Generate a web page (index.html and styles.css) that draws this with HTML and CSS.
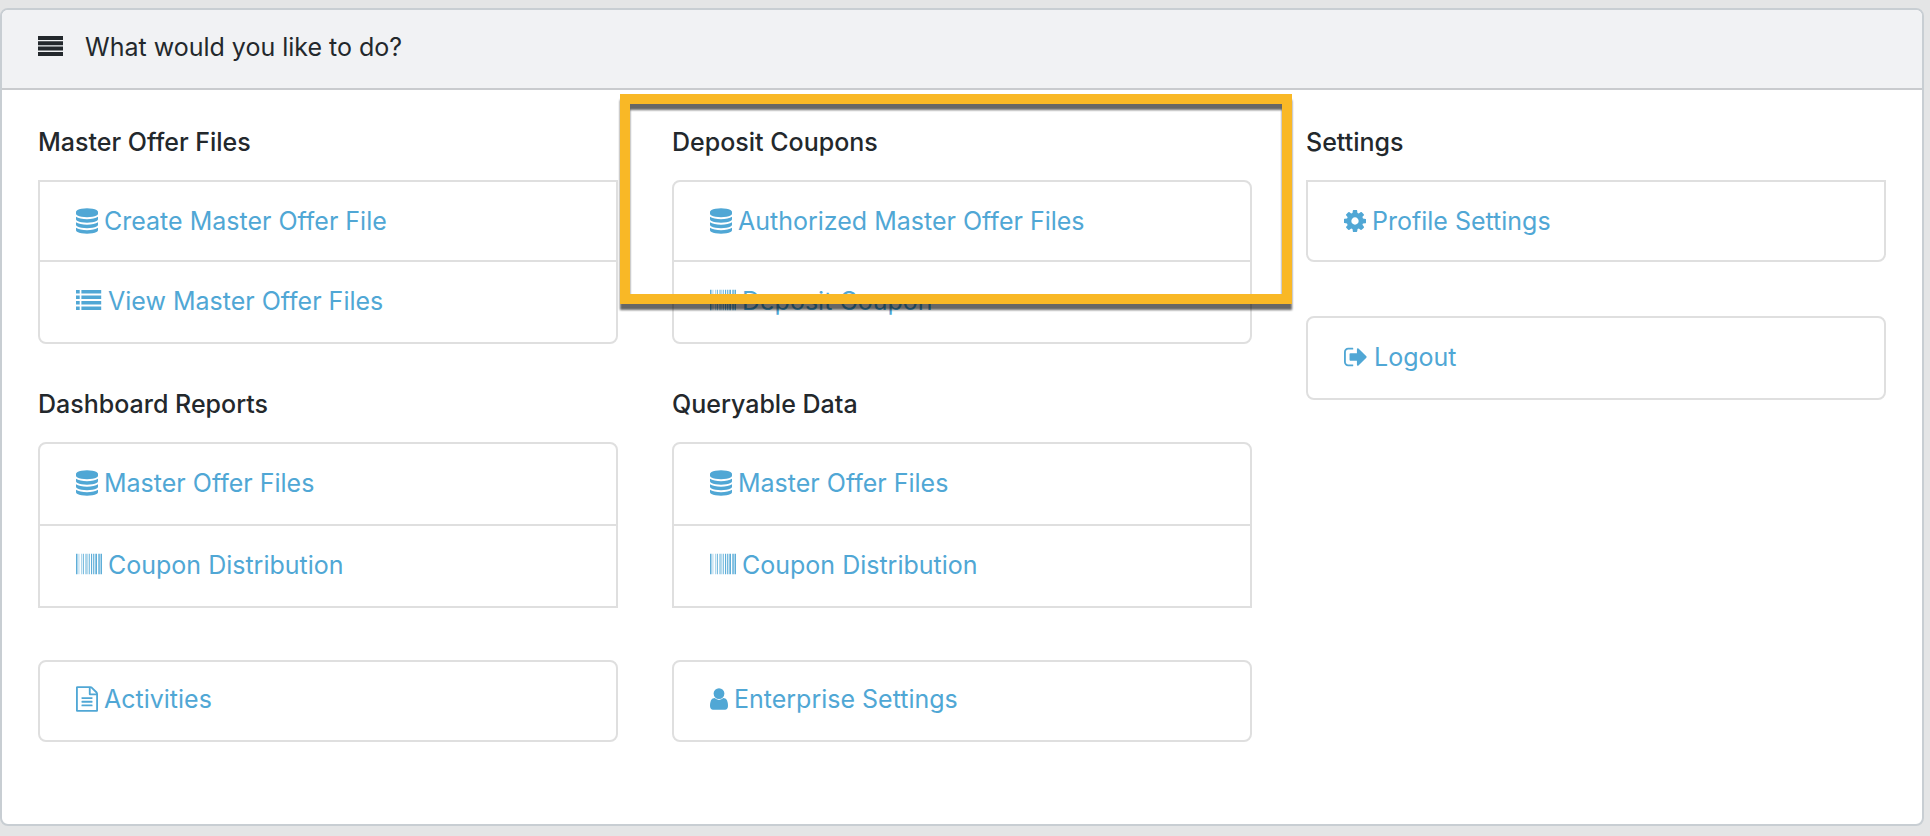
FILE: index.html
```
<!DOCTYPE html>
<html lang="en">

<head>
    <meta charset="utf-8">
    <meta name="viewport" content="width=device-width, initial-scale=1.0">
    <title>What would you like to do?</title>
    <link rel="stylesheet" href="styles.css">
</head>

<body>
    <!-- icons -->
    <svg class="sprite" aria-hidden="true">
        <symbol id="bars" viewBox="0 0 26 26">
            <path d="M0 2h25v4H0zM0 7.3h25v4H0zM0 12.6h25v4H0zM0 18h25v4H0z" />
        </symbol>
        <symbol id="list" viewBox="0 0 26 26">
            <path d="M0 2h3.7v3.6H0zM0 7.4h3.7V11H0zM0 13h3.7v3.6H0zM0 18.4h3.7V22H0zM5.4 2h19.8v3.6H5.4zM5.4 7.4h19.8V11H5.4zM5.4 13h19.8v3.6H5.4zM5.4 18.4h19.8V22H5.4z" />
        </symbol>
        <symbol id="database" viewBox="128 0 1536 1792">
            <path d="M896 768q237 0 443-43t325-127v170q0 69-103 128t-280 93.500-385 34.500-385-34.500-280-93.500-103-128v-170q119 84 325 127t443 43zm0 768q237 0 443-43t325-127v170q0 69-103 128t-280 93.500-385 34.500-385-34.500-280-93.500-103-128v-170q119 84 325 127t443 43zm0-384q237 0 443-43t325-127v170q0 69-103 128t-280 93.500-385 34.500-385-34.500-280-93.500-103-128v-170q119 84 325 127t443 43zm0-1152q208 0 385 34.500t280 93.500 103 128v128q0 69-103 128t-280 93.500-385 34.500-385-34.500-280-93.500-103-128v-128q0-69 103-128t280-93.500 385-34.500z" />
        </symbol>
        <symbol id="barcode" viewBox="0 0 1792 1792">
            <path d="M0 128h63v1408H0zM94 128h32v1408H94zM189 128h31v1408h-31zM346 128h31v1408h-31zM472 128h62v1408h-62zM629 128h31v1408h-31zM692 128h31v1408h-31zM755 128h31v1408h-31zM881 128h62v1408h-62zM1037 128h63v1408h-63zM1163 128h63v1408h-63zM1289 128h63v1408h-63zM1383 128h63v1408h-63zM1541 128h94v1408h-94zM1666 128h32v1408h-32zM1729 128h63v1408h-63z" />
        </symbol>
        <symbol id="cog" viewBox="128 0 1536 1792">
            <path d="M1152 896q0-106-75-181t-181-75-181 75-75 181 75 181 181 75 181-75 75-181zm512-109v222q0 12-8 23t-20 13l-185 28q-19 54-39 91 35 50 107 138 10 12 10 25t-9 23q-27 37-99 108t-94 71q-12 0-26-9l-138-108q-44 23-91 38-16 136-29 186-7 28-36 28h-222q-14 0-24.500-8.500t-11.500-21.500l-28-184q-49-16-90-37l-141 107q-10 9-25 9-14 0-25-11-126-114-165-168-7-10-7-23 0-12 8-23 15-21 51-66.500t54-70.500q-27-50-41-99l-183-27q-13-2-21-12.500t-8-23.500v-222q0-12 8-23t19-13l186-28q14-46 39-92-40-57-107-138-10-12-10-24 0-10 9-23 26-36 98.500-107.500t94.500-71.500q13 0 26 10l138 107q44-23 91-38 16-136 29-186 7-28 36-28h222q14 0 24.500 8.500t11.500 21.500l28 184q49 16 90 37l142-107q9-9 24-9 13 0 25 10 129 119 165 170 7 8 7 22 0 12-8 23-15 21-51 66.500t-54 70.500q26 50 41 98l183 28q13 2 21 12.500t8 23.500z" />
        </symbol>
        <symbol id="sign-out" viewBox="64 0 1664 1792">
            <path d="M704 1440q0 4 1 20t.5 26.500-3 23.500-10 19.500-20.500 6.500h-320q-119 0-203.500-84.500t-84.500-203.500v-704q0-119 84.500-203.500t203.500-84.500h320q13 0 22.500 9.500t9.500 22.500q0 4 1 20t.5 26.500-3 23.500-10 19.500-20.500 6.500h-320q-66 0-113 47t-47 113v704q0 66 47 113t113 47h312l11.500 1 11.500 3 8 5.500 7 9 2 13.500zm928-544q0 26-19 45l-544 544q-19 19-45 19t-45-19-19-45v-288h-448q-26 0-45-19t-19-45v-384q0-26 19-45t45-19h448v-288q0-26 19-45t45-19 45 19l544 544q19 19 19 45z" />
        </symbol>
        <symbol id="file" viewBox="128 0 1536 1792">
            <path d="M1596 380q28 28 48 76t20 88v1152q0 40-28 68t-68 28h-1344q-40 0-68-28t-28-68v-1600q0-40 28-68t68-28h896q40 0 88 20t76 48zm-444-244v376h376q-10-29-22-41l-313-313q-12-12-41-22zm384 1528v-1024h-416q-40 0-68-28t-28-68v-416h-768v1536h1280zm-1024-864q0-14 9-23t23-9h704q14 0 23 9t9 23v64q0 14-9 23t-23 9h-704q-14 0-23-9t-9-23v-64zm736 224q14 0 23 9t9 23v64q0 14-9 23t-23 9h-704q-14 0-23-9t-9-23v-64q0-14 9-23t23-9h704zm0 256q14 0 23 9t9 23v64q0 14-9 23t-23 9h-704q-14 0-23-9t-9-23v-64q0-14 9-23t23-9h704z" />
        </symbol>
        <symbol id="user" viewBox="256 0 1280 1792">
            <path d="M1536 1399q0 109-62.500 187t-150.500 78h-854q-88 0-150.500-78t-62.500-187q0-85 8.500-160.500t31.500-152 58.500-131 94-89 134.500-34.500q131 128 313 128t313-128q76 0 134.500 34.500t94 89 58.500 131 31.500 152 8.500 160.500zm-256-887q0 159-112.500 271.500t-271.500 112.500-271.500-112.500-112.500-271.500 112.500-271.500 271.500-112.500 271.500 112.500 112.500 271.500z" />
        </symbol>
    </svg>

    <main class="card">
        <header class="card-header">
            <svg class="icon icon-wide"><use href="#bars" /></svg>
            <h1>What would you like to do?</h1>
        </header>

        <div class="card-body">
            <div class="column">
                <section>
                    <h2>Master Offer Files</h2>
                    <nav class="menu menu-compact square-top">
                        <a href="#"><svg class="icon"><use href="#database" /></svg>Create Master Offer File</a>
                        <a href="#"><svg class="icon icon-wide"><use href="#list" /></svg>View Master Offer Files</a>
                    </nav>
                </section>
                <section>
                    <h2>Dashboard Reports</h2>
                    <nav class="menu square-bottom">
                        <a href="#"><svg class="icon"><use href="#database" /></svg>Master Offer Files</a>
                        <a href="#"><svg class="icon icon-wide"><use href="#barcode" /></svg>Coupon Distribution</a>
                    </nav>
                    <nav class="menu menu-single">
                        <a href="#"><svg class="icon"><use href="#file" /></svg>Activities</a>
                    </nav>
                </section>
            </div>

            <div class="column">
                <section class="marked">
                    <h2>Deposit Coupons</h2>
                    <nav class="menu menu-compact">
                        <a href="#"><svg class="icon"><use href="#database" /></svg>Authorized Master Offer Files</a>
                        <a href="#"><svg class="icon icon-wide"><use href="#barcode" /></svg>Deposit Coupon</a>
                    </nav>
                    <div class="highlight"></div>
                </section>
                <section>
                    <h2>Queryable Data</h2>
                    <nav class="menu square-bottom">
                        <a href="#"><svg class="icon"><use href="#database" /></svg>Master Offer Files</a>
                        <a href="#"><svg class="icon icon-wide"><use href="#barcode" /></svg>Coupon Distribution</a>
                    </nav>
                    <nav class="menu menu-single">
                        <a href="#"><svg class="icon icon-user"><use href="#user" /></svg>Enterprise Settings</a>
                    </nav>
                </section>
            </div>

            <div class="column">
                <section>
                    <h2>Settings</h2>
                    <nav class="menu menu-compact square-top">
                        <a href="#"><svg class="icon"><use href="#cog" /></svg>Profile Settings</a>
                    </nav>
                    <nav class="menu">
                        <a href="#"><svg class="icon icon-exit"><use href="#sign-out" /></svg>Logout</a>
                    </nav>
                </section>
            </div>
        </div>
    </main>
</body>

</html>
```
FILE: styles.css
```
* {
    padding: 0;
    margin: 0;
    box-sizing: border-box;
}

body {
    display: flex;
    min-height: 100vh;
    padding: 8px 6px 10px 0;
    background-color: #e4e5e6;
    color: #23282c;
    font-family: Inter, "Liberation Sans", sans-serif;
    font-size: 25px;
    line-height: 30px;
}

.sprite {
    position: absolute;
    width: 0;
    height: 0;
}

.card {
    flex: 1;
    background-color: white;
    border: 2px solid #c8ced3;
    border-radius: 8px;
}

.card-header {
    display: flex;
    align-items: center;
    gap: 21px;
    padding: 22px 36px 26px;
    background-color: #f1f2f4;
    border-bottom: 2px solid #c9cbce;
    border-radius: 6px 6px 0 0;
}

h1,
h2 {
    font-size: 25px;
    line-height: 30px;
}

h1 {
    font-weight: 400;
}

h2 {
    font-weight: 500;
    margin-bottom: 23px;
}

.card-body {
    display: grid;
    grid-template-columns: repeat(3, 1fr);
    gap: 54px;
    padding: 37px 36px;
}

.column {
    display: flex;
    flex-direction: column;
    gap: 45px;
}

.menu {
    border: 2px solid #dfdfdf;
    border-radius: 8px;
}

.menu a {
    display: flex;
    align-items: center;
    gap: 6px;
    padding: 24px 36px 26px;
    color: #50a7d5;
    text-decoration: none;
}

.menu a:hover {
    text-decoration: underline;
}

.menu a + a {
    border-top: 2px solid #dfdfdf;
}

.menu + .menu {
    margin-top: 54px;
}

.menu-compact a:first-child {
    padding-bottom: 24px;
}

.menu + .menu-single {
    margin-top: 52px;
}

.menu-single a {
    padding-top: 22px;
}

.square-top {
    border-top-left-radius: 0;
    border-top-right-radius: 0;
}

.square-bottom {
    border-bottom-left-radius: 0;
    border-bottom-right-radius: 0;
}

.icon {
    flex: none;
    width: 22px;
    height: 26px;
    fill: currentColor;
}

.icon-wide {
    width: 26px;
}

.icon-user {
    width: 18px;
}

.icon-exit {
    width: 24px;
}

/* frame drawn over the deposit section */
.marked {
    position: relative;
}

.highlight {
    position: absolute;
    top: -33px;
    right: -40px;
    bottom: 40px;
    left: -52px;
    border: 10px solid #f9b826;
    filter: drop-shadow(0 6px 1px rgba(0, 0, 0, 0.6));
    pointer-events: none;
}
```
